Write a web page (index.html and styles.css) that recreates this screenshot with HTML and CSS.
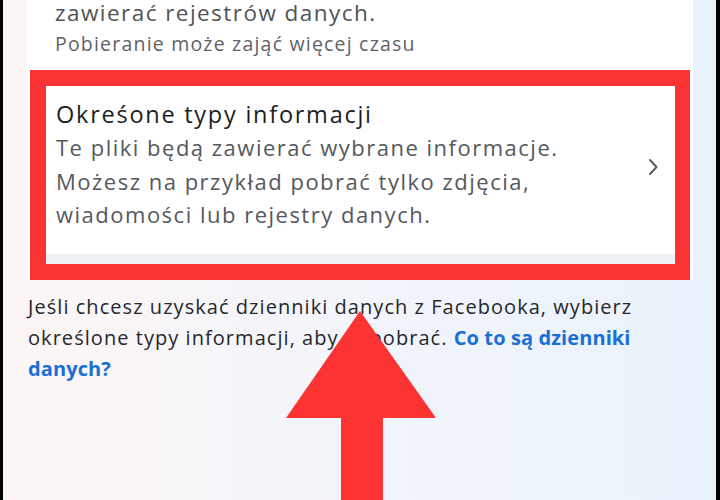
FILE: index.html
```html
<!DOCTYPE html>
<html lang="pl">
<head>
<meta charset="utf-8">
<link rel="stylesheet" href="styles.css">
</head>
<body>
<div class="screen">
  <div class="card">
    <div class="opt-prev">
      <p class="prev-desc">zawierać rejestrów danych.</p>
      <p class="prev-note">Pobieranie może zająć więcej czasu</p>
    </div>
    <div class="opt-hl">
      <div class="opt-inner">
        <div class="opt-text">
          <p class="opt-title">Okreśone typy informacji</p>
          <p class="opt-desc">Te pliki będą zawierać wybrane informacje.<br>Możesz na przykład pobrać tylko zdjęcia,<br>wiadomości lub rejestry danych.</p>
        </div>
        <svg class="chev" width="12" height="20" viewBox="0 0 12 20"><path d="M3 3 L9.5 10 L3 17" fill="none" stroke="#5a5d62" stroke-width="2" stroke-linecap="round" stroke-linejoin="round"/></svg>
      </div>
      <div class="opt-foot"></div>
    </div>
  </div>
  <p class="info">Jeśli chcesz uzyskać dzienniki danych z Facebooka, wybierz<br>określone typy informacji, aby je pobrać. <a class="link" href="#">Co to są dzienniki<br>danych?</a></p>
  <svg class="arrow" width="150" height="190" viewBox="0 0 150 190"><polygon points="75,0 151,107 98,107 98,190 56,190 56,107 1,107" fill="#fb3333"/></svg>
</div>
</body>
</html>
```
FILE: styles.css
```css
* { box-sizing: border-box; }
html, body { margin: 0; padding: 0; }
body {
  width: 720px;
  height: 500px;
  overflow: hidden;
  background: #000;
  font-family: "Open Sans", "Noto Sans", sans-serif;
}
.screen {
  position: relative;
  margin-left: 3px;
  width: 713px;
  height: 500px;
  background: linear-gradient(90deg, #fdf5f5 0%, #f3f5fa 45%, #e9f2fb 100%);
  padding: 0 0 0 24px;
  overflow: hidden;
}
.card {
  width: 666px;
  background: #fff;
}
p { margin: 0; }
.opt-prev {
  padding: 0 0 0 28px;
  height: 72px;
}
.prev-desc {
  font-size: 22.5px;
  line-height: 30px;
  color: #505357;
  margin-top: -2px;
  letter-spacing: 1.45px;
}
.prev-note {
  font-size: 19.5px;
  line-height: 26px;
  color: #5f6266;
  margin-top: 3px;
  letter-spacing: 1.2px;
}
.opt-hl {
  margin: 0 3px;
  border: 16px solid #fa3434;
  border-right-width: 15px;
  background: #fff;
}
.opt-inner {
  display: flex;
  align-items: center;
  padding: 12px 16px 22px 10px;
}
.opt-text { flex: 1; }
.opt-title {
  font-size: 23.5px;
  line-height: 33px;
  color: #1c1e21;
  letter-spacing: 1.75px;
}
.opt-desc {
  font-size: 22px;
  line-height: 33.5px;
  color: #55585c;
  letter-spacing: 1.5px;
}
.chev { display: block; margin-top: 4px; }
.opt-foot {
  height: 10px;
  background: #eef1f5;
}
.info {
  margin: 11px 0 0 1px;
  width: 680px;
  font-size: 20px;
  line-height: 31px;
  color: #26282c;
  letter-spacing: 1.05px;
}
.link {
  color: #1a6fd6;
  font-weight: 700;
  text-decoration: none;
  letter-spacing: 0.1px;
}
.arrow {
  position: absolute;
  left: 282px;
  top: 311px;
}
```
